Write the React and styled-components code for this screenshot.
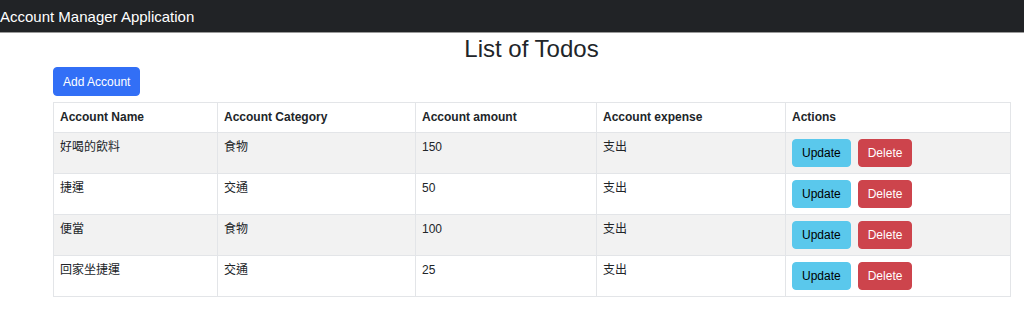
import React from 'react';
import styled, { createGlobalStyle } from 'styled-components';

const GlobalStyle = createGlobalStyle`
  body {
    margin: 0;
    background: #fff;
    color: #212529;
    font-family: "Liberation Sans", "Noto Sans CJK TC", sans-serif;
    font-size: 12px;
  }
`;

const accounts = [
  { name: '好喝的飲料', category: '食物', amount: 150, expense: '支出' },
  { name: '捷運', category: '交通', amount: 50, expense: '支出' },
  { name: '便當', category: '食物', amount: 100, expense: '支出' },
  { name: '回家坐捷運', category: '交通', amount: 25, expense: '支出' },
];

function App() {
  return (
    <>
      <GlobalStyle />
      <Navbar>
        <Brand>Account Manager Application</Brand>
      </Navbar>
      <Container>
        <Title>List of Todos</Title>
        <Button variant="primary">Add Account</Button>
        <Table>
          <colgroup>
            <col style={{ width: 164 }} />
            <col style={{ width: 198 }} />
            <col style={{ width: 181 }} />
            <col style={{ width: 189 }} />
            <col style={{ width: 225 }} />
          </colgroup>
          <thead>
            <tr>
              <Th>Account Name</Th>
              <Th>Account Category</Th>
              <Th>Account amount</Th>
              <Th>Account expense</Th>
              <Th>Actions</Th>
            </tr>
          </thead>
          <tbody>
            {accounts.map((a, i) => (
              <Row key={i} striped={i % 2 === 0}>
                <Td>{a.name}</Td>
                <Td>{a.category}</Td>
                <Td>{a.amount}</Td>
                <Td>{a.expense}</Td>
                <Td>
                  <Actions>
                    <Button variant="info" small>Update</Button>
                    <Button variant="danger" small>Delete</Button>
                  </Actions>
                </Td>
              </Row>
            ))}
          </tbody>
        </Table>
      </Container>
    </>
  );
}

const colors = {
  primary: { bg: '#326ff6', fg: '#fff' },
  info: { bg: '#5ac8ec', fg: '#000' },
  danger: { bg: '#cd444c', fg: '#fff' },
};

const Navbar = styled.nav`
  height: 33px;
  background: #212326;
  display: flex;
  align-items: center;
  border-bottom: 1px solid #9a9a9a;
  box-sizing: border-box;
`;

const Brand = styled.span`
  color: #fff;
  font-size: 15px;
  line-height: 22px;
  padding-top: 1px;
`;

const Container = styled.div`
  margin: 0 14px 0 53px;
  width: 957px;
  display: flex;
  flex-direction: column;
  align-items: flex-start;
`;

const Title = styled.h2`
  align-self: stretch;
  margin: 1px 0 0;
  text-align: center;
  font-size: 24px;
  font-weight: 500;
  line-height: 29px;
  color: #212529;
`;

const Button = styled.button`
  font-family: inherit;
  font-size: 12px;
  line-height: 18px;
  padding: ${p => (p.small ? '4px 9px' : '4.5px 9px')};
  border: 1px solid ${p => colors[p.variant].bg};
  border-radius: 4px;
  background: ${p => colors[p.variant].bg};
  color: ${p => colors[p.variant].fg};
  cursor: pointer;
  ${p => p.variant === 'primary' && 'margin-top: 4px;'}
`;

const Table = styled.table`
  margin-top: 6px;
  width: 957px;
  table-layout: fixed;
  border-collapse: collapse;
  border: 1px solid #e3e5e8;
`;

const Th = styled.th`
  text-align: left;
  font-weight: 700;
  padding: 6px;
  line-height: 17px;
  border: 1px solid #e3e5e8;
`;

const Row = styled.tr`
  background: ${p => (p.striped ? '#f2f2f2' : '#fff')};
`;

const Td = styled.td`
  vertical-align: top;
  padding: 6px;
  line-height: 17px;
  border: 1px solid #e3e5e8;
`;

const Actions = styled.div`
  display: flex;
  gap: 7px;
`;

export default App;
